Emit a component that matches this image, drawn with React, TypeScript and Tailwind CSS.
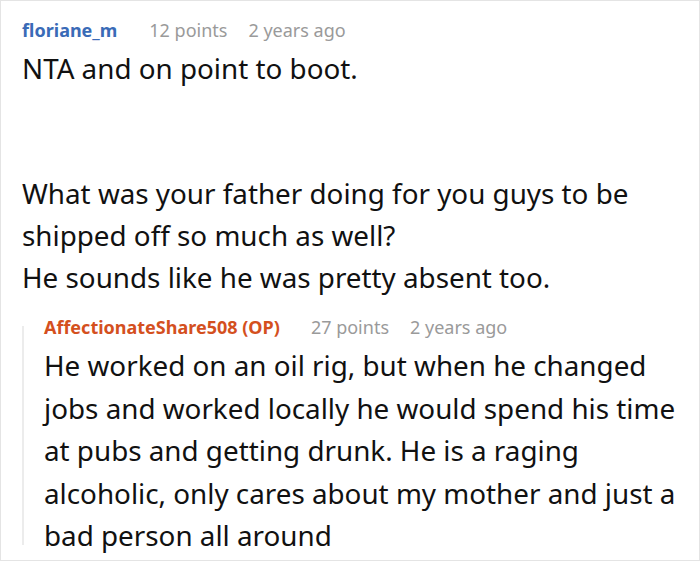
export default function App() {
  return (
    <div
      className="h-[562px] w-[700px] overflow-hidden bg-white"
      style={{ fontFamily: '"Noto Sans", sans-serif' }}
    >
      <div className="h-[561px] border border-[#e4e4e4] pl-[21px] pr-[12px] pt-[16px]">
        {/* top comment */}
        <div className="flex h-[30px] items-baseline text-[18px] leading-[26px]">
          <span className="font-bold text-[#3a6bb7]">floriane_m</span>
          <span className="ml-[32px] text-[#9a9a9a]">12 points</span>
          <span className="ml-[21px] text-[#9a9a9a]">2 years ago</span>
        </div>
        <div className="text-[27.8px] leading-[42px] text-[#111]">
          <p>NTA and on point to boot.</p>
          <p className="mt-[83px]">What was your father doing for you guys to be shipped off so much as well?</p>
          <p>He sounds like he was pretty absent too.</p>
        </div>

        {/* reply */}
        <div className="relative mt-[16px] pl-[22px]">
          <div className="absolute bottom-[12px] left-0 top-[12px] w-[2px] bg-[#ececec]" />
          <div className="flex h-[30px] items-baseline text-[18px] leading-[26px]">
            <span className="font-bold text-[#d4501e]">AffectionateShare508 (OP)</span>
            <span className="ml-[31px] text-[#9a9a9a]">27 points</span>
            <span className="ml-[21px] text-[#9a9a9a]">2 years ago</span>
          </div>
          <p className="text-[27.8px] leading-[42.5px] text-[#111]">
            He worked on an oil rig, but when he changed jobs and worked locally he would spend his time at pubs and getting drunk. He is a raging alcoholic, only cares about my mother and just a bad person all around
          </p>
        </div>
      </div>
    </div>
  );
}
